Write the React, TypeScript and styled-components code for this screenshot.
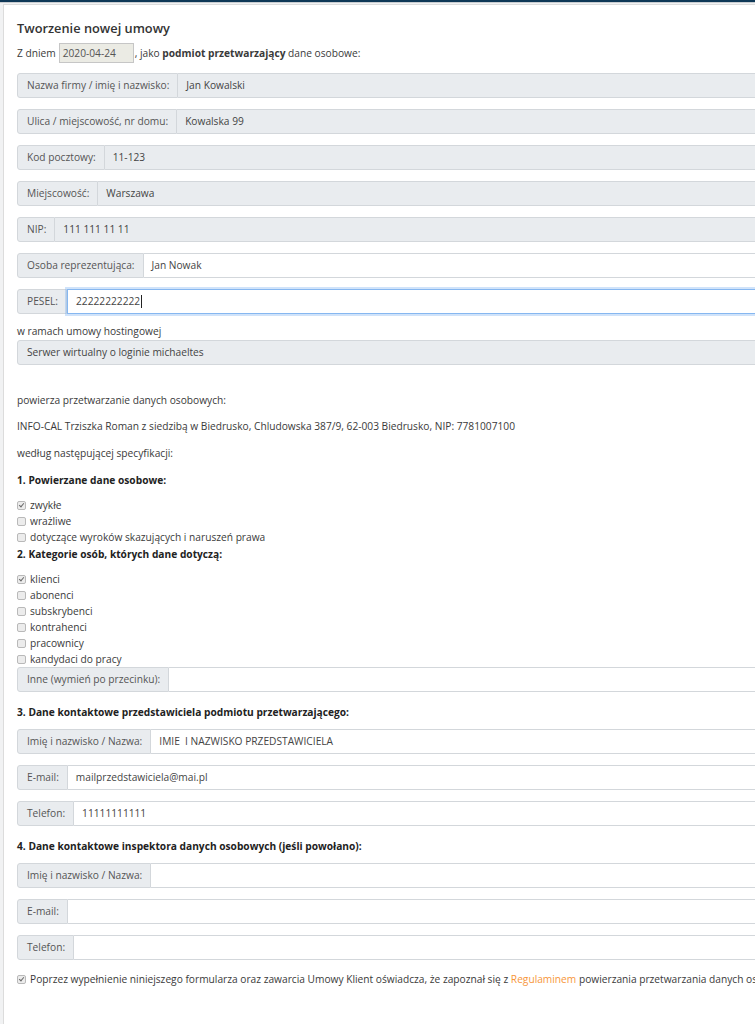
import React from 'react';
import styled, { createGlobalStyle, css } from 'styled-components';

const GlobalStyle = createGlobalStyle`
    html, body {
        margin: 0;
        padding: 0;
        background: #f1f2f3;
        overflow: hidden;
    }
    body {
        font-family: 'Open Sans', 'Noto Sans', 'DejaVu Sans', sans-serif;
        font-size: 10.2px;
        color: #3a3a3a;
    }
`;

const TopBar = styled.div`
    height: 2px;
    background: #0e3857;
    border-bottom: 1px solid #c9cdd1;
`;

const Card = styled.div`
    width: 1100px;
    margin: 1px 0 0 3px;
    padding: 13px 0 60px 13px;
    background: #fff;
    border-left: 1px solid #dcdcdc;
    border-top: 1px solid #dcdcdc;
`;

const Title = styled.h1`
    margin: 0 0 4px;
    font-size: 12.8px;
    line-height: 20px;
    font-weight: 600;
    color: #333;
`;

const IntroLine = styled.div`
    display: flex;
    align-items: center;
    height: 22px;
    margin-bottom: 9px;
    white-space: pre;
`;

const DateBox = styled.span`
    display: inline-flex;
    align-items: center;
    box-sizing: border-box;
    width: 75px;
    height: 20px;
    margin: 0 1px 0 3px;
    padding: 0 3px;
    background: #ebebe4;
    border: 1px solid #c6c6c6;
    color: #555;
`;

const Group = styled.div`
    display: flex;
    height: 24.5px;
    margin-bottom: 11.5px;
`;

const Addon = styled.div`
    display: flex;
    align-items: center;
    padding: 0 8px 0 9px;
    background: #e9ecef;
    border: 1px solid #d3d7db;
    border-radius: 3px 0 0 3px;
    color: #555;
    white-space: nowrap;
`;

const Field = styled.div<{ $readonly?: boolean; $focused?: boolean; $alone?: boolean }>`
    flex: 1;
    display: flex;
    align-items: center;
    padding: 0 8px;
    background: ${(p) => (p.$readonly ? '#e9ecef' : '#fff')};
    border: 1px solid #d3d7db;
    border-left: ${(p) => (p.$alone ? '1px solid #d3d7db' : '0')};
    color: #444;
    white-space: pre;
    ${(p) =>
        p.$alone &&
        css`
            padding-left: 9px;
            border-radius: 3px 0 0 3px;
        `}
    ${(p) =>
        p.$focused &&
        css`
            border: 1px solid #86b7f0;
            box-shadow: 0 0 0 2px rgba(120, 175, 240, 0.35);
        `}
`;

const Caret = styled.span`
    display: inline-block;
    width: 1px;
    height: 13px;
    margin-left: 1px;
    background: #222;
`;

const Text = styled.p<{ $gap?: number }>`
    margin: 0 0 ${(p) => p.$gap ?? 9}px;
    line-height: 18px;
    white-space: nowrap;
`;

const HostingLabel = styled.p`
    margin: -3px 0 0;
    line-height: 18px;
`;

const Heading = styled.h3<{ $gap?: number }>`
    margin: 0 0 ${(p) => p.$gap ?? 9}px;
    font-size: 10.2px;
    line-height: 18px;
    font-weight: 700;
    color: #222;
`;

const CheckList = styled.div`
    display: flex;
    flex-direction: column;
`;

const CheckRow = styled.label`
    display: flex;
    align-items: center;
    gap: 4px;
    height: 16px;
`;

const CheckText = styled.span`
    white-space: nowrap;
`;

const Box = styled.span<{ $checked?: boolean }>`
    position: relative;
    box-sizing: border-box;
    width: 9px;
    height: 9px;
    border: 1px solid #b9b9b9;
    border-radius: 2px;
    background: #ececec;
    flex-shrink: 0;
    &::after {
        content: '';
        display: ${(p) => (p.$checked ? 'block' : 'none')};
        position: absolute;
        left: 2px;
        top: 0;
        width: 2px;
        height: 4px;
        border: solid #6a6a6a;
        border-width: 0 1.5px 1.5px 0;
        transform: rotate(40deg);
    }
`;

const Orange = styled.span`
    color: #f7963a;
`;

const Spacer = styled.div<{ $h: number }>`
    height: ${(p) => p.$h}px;
`;

const companyRows = [
    { label: 'Nazwa firmy / imię i nazwisko:', value: 'Jan Kowalski', readonly: true },
    { label: 'Ulica / miejscowość, nr domu:', value: 'Kowalska 99', readonly: true },
    { label: 'Kod pocztowy:', value: '11-123', readonly: true },
    { label: 'Miejscowość:', value: 'Warszawa', readonly: true },
    { label: 'NIP:', value: '111 111 11 11', readonly: true },
    { label: 'Osoba reprezentująca:', value: 'Jan Nowak', readonly: false }
];

const dataKinds = [
    { label: 'zwykłe', checked: true },
    { label: 'wrażliwe', checked: false },
    { label: 'dotyczące wyroków skazujących i naruszeń prawa', checked: false }
];

const personKinds = [
    { label: 'klienci', checked: true },
    { label: 'abonenci', checked: false },
    { label: 'subskrybenci', checked: false },
    { label: 'kontrahenci', checked: false },
    { label: 'pracownicy', checked: false },
    { label: 'kandydaci do pracy', checked: false }
];

const representative = [
    { label: 'Imię i nazwisko / Nazwa:', value: 'IMIE  I NAZWISKO PRZEDSTAWICIELA' },
    { label: 'E-mail:', value: 'mailprzedstawiciela@mai.pl' },
    { label: 'Telefon:', value: '11111111111' }
];

const inspector = [
    { label: 'Imię i nazwisko / Nazwa:', value: '' },
    { label: 'E-mail:', value: '' },
    { label: 'Telefon:', value: '' }
];

const App = () => {
    const renderCheck = (item: { label: string; checked: boolean }) => (
        <CheckRow key={item.label}>
            <Box $checked={item.checked} />
            <CheckText>{item.label}</CheckText>
        </CheckRow>
    );

    return (
        <>
            <GlobalStyle />
            <TopBar />
            <Card>
                <Title>Tworzenie nowej umowy</Title>
                <IntroLine>
                    Z dniem<DateBox>2020-04-24</DateBox>, jako <b>podmiot przetwarzający</b> dane osobowe:
                </IntroLine>

                {companyRows.map((row) => (
                    <Group key={row.label}>
                        <Addon>{row.label}</Addon>
                        <Field $readonly={row.readonly}>{row.value}</Field>
                    </Group>
                ))}
                <Group>
                    <Addon>PESEL:</Addon>
                    <Field $focused>
                        22222222222
                        <Caret />
                    </Field>
                </Group>

                <HostingLabel>w ramach umowy hostingowej</HostingLabel>
                <Group>
                    <Field $readonly $alone>
                        Serwer wirtualny o loginie michaeltes
                    </Field>
                </Group>
                <Spacer $h={15} />

                <Text $gap={8}>powierza przetwarzanie danych osobowych:</Text>
                <Text>INFO-CAL Trziszka Roman z siedzibą w Biedrusko, Chludowska 387/9, 62-003 Biedrusko, NIP: 7781007100</Text>
                <Text>według następującej specyfikacji:</Text>

                <Heading $gap={8}>1. Powierzane dane osobowe:</Heading>
                <CheckList>{dataKinds.map(renderCheck)}</CheckList>
                <Heading $gap={8}>2. Kategorie osób, których dane dotyczą:</Heading>
                <CheckList>{personKinds.map(renderCheck)}</CheckList>
                <Group>
                    <Addon>Inne (wymień po przecinku):</Addon>
                    <Field />
                </Group>

                <Heading $gap={8}>3. Dane kontaktowe przedstawiciela podmiotu przetwarzającego:</Heading>
                {representative.map((row) => (
                    <Group key={row.label}>
                        <Addon>{row.label}</Addon>
                        <Field>{row.value}</Field>
                    </Group>
                ))}

                <Heading $gap={8}>4. Dane kontaktowe inspektora danych osobowych (jeśli powołano):</Heading>
                {inspector.map((row) => (
                    <Group key={row.label}>
                        <Addon>{row.label}</Addon>
                        <Field>{row.value}</Field>
                    </Group>
                ))}

                <CheckRow>
                    <Box $checked />
                    <CheckText>
                        Poprzez wypełnienie niniejszego formularza oraz zawarcia Umowy Klient oświadcza, że zapoznał się z{' '}
                        <Orange>Regulaminem</Orange> powierzania przetwarzania danych osobowych.
                    </CheckText>
                </CheckRow>
            </Card>
        </>
    );
};

export default App;
